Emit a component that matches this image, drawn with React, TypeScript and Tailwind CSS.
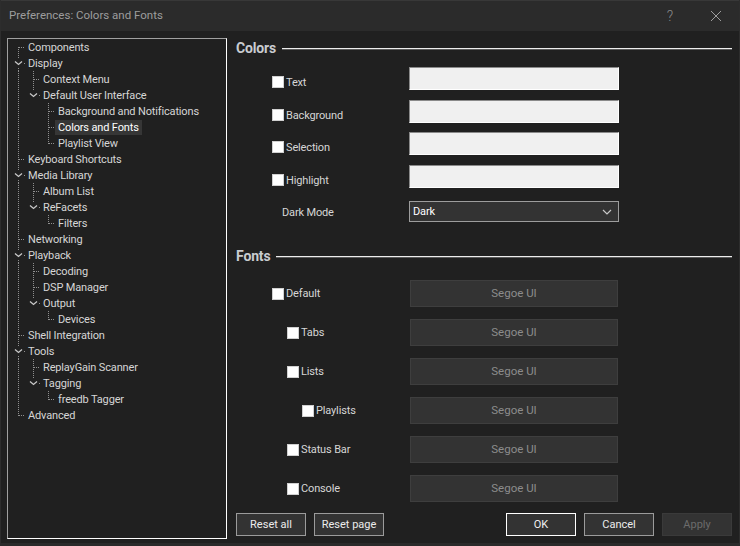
import React from "react";

type TreeNode = { label: string; children?: TreeNode[] };

type Row = {
  label: string;
  level: number;
  expandable: boolean;
  last: boolean;
  first: boolean;
  trail: boolean[];
};

const tree: TreeNode[] = [
  { label: "Components" },
  {
    label: "Display",
    children: [
      { label: "Context Menu" },
      {
        label: "Default User Interface",
        children: [
          { label: "Background and Notifications" },
          { label: "Colors and Fonts" },
          { label: "Playlist View" },
        ],
      },
    ],
  },
  { label: "Keyboard Shortcuts" },
  {
    label: "Media Library",
    children: [
      { label: "Album List" },
      { label: "ReFacets", children: [{ label: "Filters" }] },
    ],
  },
  { label: "Networking" },
  {
    label: "Playback",
    children: [
      { label: "Decoding" },
      { label: "DSP Manager" },
      { label: "Output", children: [{ label: "Devices" }] },
    ],
  },
  { label: "Shell Integration" },
  {
    label: "Tools",
    children: [
      { label: "ReplayGain Scanner" },
      { label: "Tagging", children: [{ label: "freedb Tagger" }] },
    ],
  },
  { label: "Advanced" },
];

function flatten(nodes: TreeNode[], level: number, trail: boolean[], out: Row[]) {
  nodes.forEach((n, i) => {
    const last = i === nodes.length - 1;
    out.push({
      label: n.label,
      level,
      expandable: !!n.children,
      last,
      first: level === 0 && i === 0,
      trail,
    });
    if (n.children) flatten(n.children, level + 1, [...trail, last], out);
  });
  return out;
}

const rows = flatten(tree, 0, [], []);
const DOT = "#8f8f8f";

function Guides({ row }: { row: Row }) {
  const w = 17 + 15 * row.level;
  const x = 10.5 + 15 * row.level;
  return (
    <svg width={w} height={16} className="shrink-0" shapeRendering="crispEdges">
      {row.trail.map((isLast, a) =>
        isLast ? null : (
          <line key={a} x1={10.5 + 15 * a} y1={0} x2={10.5 + 15 * a} y2={16} stroke={DOT} strokeDasharray="1 1" />
        )
      )}
      {row.expandable ? (
        <>
          {!row.first && <line x1={x} y1={0} x2={x} y2={3} stroke={DOT} strokeDasharray="1 1" />}
          {!row.last && <line x1={x} y1={13} x2={x} y2={16} stroke={DOT} strokeDasharray="1 1" />}
          <path
            d={`M${x - 3.5} 6.5 L${x} 9.5 L${x + 3.5} 6.5`}
            fill="none"
            stroke="#c8c8c8"
            strokeWidth={1.3}
            shapeRendering="geometricPrecision"
          />
          <rect x={w - 1} y={8} width={1} height={1} fill={DOT} />
        </>
      ) : (
        <>
          <line
            x1={x}
            y1={row.first ? 8 : 0}
            x2={x}
            y2={row.last ? 9 : 16}
            stroke={DOT}
            strokeDasharray="1 1"
          />
          <line x1={x + 0.5} y1={8.5} x2={w} y2={8.5} stroke={DOT} strokeDasharray="1 1" />
        </>
      )}
    </svg>
  );
}

function Tree() {
  return (
    <div className="w-[220px] h-[501px] border-t border-l border-t-[#a0a0a0] border-l-[#a0a0a0] border-b border-r border-b-white border-r-white bg-[#202020] tracking-[-0.15px]">
      {rows.map((row) => {
        const selected = row.label === "Colors and Fonts";
        return (
          <div key={row.label} className="flex h-4 items-center">
            <Guides row={row} />
            <span
              className={
                selected
                  ? "px-[3px] leading-[15px] bg-[#363636] text-white"
                  : "px-[3px] leading-[15px] text-[#d6d6d6]"
              }
            >
              {row.label}
            </span>
          </div>
        );
      })}
    </div>
  );
}

function Check() {
  return <span className="w-3 h-3 bg-white shrink-0 border border-[#d0d0d0]" />;
}

function Section({ title }: { title: string }) {
  return (
    <div className="flex h-5 items-center">
      <span className="text-[14px] font-bold text-[#c9ccd0]">{title}</span>
      <div className="ml-[6px] flex-1 h-[2px] border-t border-t-[#ececec] border-b border-b-[#5a5a5a] mt-[2px]" />
    </div>
  );
}

const colorRows = [
  { label: "Text", mt: "" },
  { label: "Background", mt: "mt-[10px]" },
  { label: "Selection", mt: "mt-[9px]" },
  { label: "Highlight", mt: "mt-[10px]" },
];

const fontRows = [
  { label: "Default", pl: "pl-[36px]" },
  { label: "Tabs", pl: "pl-[51px]" },
  { label: "Lists", pl: "pl-[51px]" },
  { label: "Playlists", pl: "pl-[66px]" },
  { label: "Status Bar", pl: "pl-[51px]" },
  { label: "Console", pl: "pl-[51px]" },
];

function Btn({ children, kind = "normal" }: { children: React.ReactNode; kind?: "normal" | "default" | "disabled" }) {
  const cls =
    kind === "default"
      ? "border-white text-[#f0f0f0]"
      : kind === "disabled"
      ? "border-[#3a3a3a] text-[#6c6c6c]"
      : "border-[#9b9b9b] text-[#ececec]";
  return (
    <button className={`w-[70px] h-[23px] bg-[#333333] border flex items-center justify-center pt-px text-[11px] ${cls}`}>
      {children}
    </button>
  );
}

export default function App() {
  return (
    <div className="w-[740px] h-[546px] overflow-hidden flex flex-col bg-[#202020] font-['Roboto','Noto_Sans',sans-serif] text-[11px] border-x border-b-[3px] border-x-[#2d2d2d] border-b-[#2a2a2a]">
      <div className="h-[31px] shrink-0 flex items-center bg-[#2b2b2b] border-t border-t-[#383838]">
        <span className="pl-[8px] text-[11.5px] text-[#9d9d9d]">Preferences: Colors and Fonts</span>
        <div className="ml-auto flex h-full">
          <div className="w-[46px] flex items-center justify-center text-[14px] text-[#8a8a8a] font-light">?</div>
          <div className="w-[46px] flex items-center justify-center">
            <svg width="12" height="12" viewBox="0 0 12 12">
              <path d="M1 1 L11 11 M11 1 L1 11" stroke="#9d9d9d" strokeWidth="1" fill="none" />
            </svg>
          </div>
        </div>
      </div>

      <div className="flex flex-1 pl-[6px] pt-[7px]">
        <Tree />

        <div className="ml-[9px] w-[496px] flex flex-col tracking-[-0.15px]">
          <Section title="Colors" />
          <div className="mt-[9px] flex flex-col">
            {colorRows.map((r) => (
              <div key={r.label} className={`flex h-[23px] ${r.mt}`}>
                <div className="w-[173px] pl-[36px] pt-[9px]">
                  <div className="flex items-center h-3">
                    <Check />
                    <span className="ml-[2px] pt-[2px] text-[#d6d6d6]">{r.label}</span>
                  </div>
                </div>
                <div className="w-[210px] h-[23px] bg-[#f0f0f0] border-t border-l border-t-[#8a8a8a] border-l-[#8a8a8a] border-b border-r border-b-white border-r-white" />
              </div>
            ))}
            <div className="flex h-[21px] mt-[13px] items-center">
              <div className="w-[173px] pl-[46px] pt-[3px] text-[#d6d6d6]">Dark Mode</div>
              <div className="w-[210px] h-[21px] bg-[#333333] border border-[#9d9d9d] flex items-center pl-[3px] pr-[6px] pt-px text-white">
                <span>Dark</span>
                <svg className="ml-auto" width="10" height="6" viewBox="0 0 10 6">
                  <path d="M1 1 L5 5 L9 1" stroke="#c8c8c8" strokeWidth="1.2" fill="none" />
                </svg>
              </div>
            </div>
          </div>

          <div className="mt-[24px]">
            <Section title="Fonts" />
          </div>
          <div className="mt-[14px] flex flex-col gap-[12px]">
            {fontRows.map((r) => (
              <div key={r.label} className="flex h-[27px] items-center">
                <div className={`w-[174px] flex items-center ${r.pl}`}>
                  <Check />
                  <span className="ml-[2px] pt-px text-[#d6d6d6]">{r.label}</span>
                </div>
                <div className="w-[208px] h-[27px] bg-[#333333] border border-[#3e3e3e] flex items-center justify-center pt-px text-[#8c8c8c] text-[11.5px] tracking-normal">
                  Segoe UI
                </div>
              </div>
            ))}
          </div>

          <div className="mt-[11px] flex tracking-normal">
            <Btn>Reset all</Btn>
            <div className="ml-[8px]">
              <Btn>Reset page</Btn>
            </div>
            <div className="ml-auto flex gap-[8px]">
              <Btn kind="default">OK</Btn>
              <Btn>Cancel</Btn>
              <Btn kind="disabled">Apply</Btn>
            </div>
          </div>
        </div>
      </div>
    </div>
  );
}
